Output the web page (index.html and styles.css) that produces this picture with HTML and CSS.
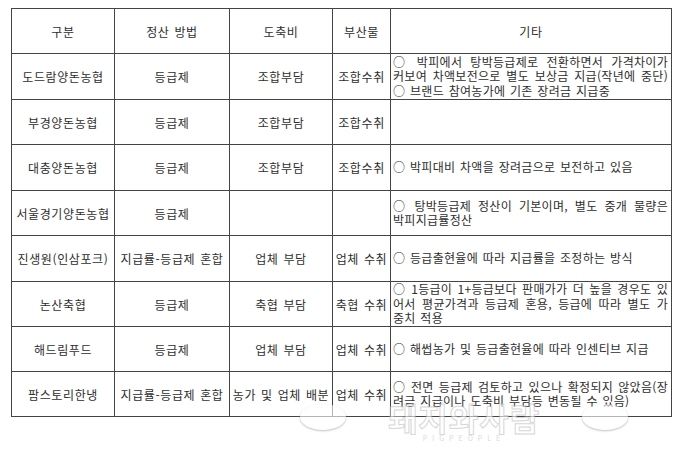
FILE: index.html
```html
<!DOCTYPE html>
<html lang="ko">
<head>
<meta charset="utf-8">
<link rel="stylesheet" href="styles.css">
</head>
<body>
<div class="wrap">
<table class="grid">
  <colgroup>
    <col class="c1"><col class="c2"><col class="c3"><col class="c4"><col class="c5">
  </colgroup>
  <tr class="r45"><th>구분</th><th>정산 방법</th><th>도축비</th><th>부산물</th><th>기타</th></tr>
  <tr class="r46"><td>도드람양돈농협</td><td>등급제</td><td>조합부담</td><td>조합수취</td><td class="note"><span class="ln j">○ 박피에서 탕박등급제로 전환하면서 가격차이가</span><span class="ln j">커보여 차액보전으로 별도 보상금 지급(작년에 중단)</span><span class="ln">○ 브랜드 참여농가에 기존 장려금 지급중</span></td></tr>
  <tr class="r45"><td>부경양돈농협</td><td>등급제</td><td>조합부담</td><td>조합수취</td><td class="note"></td></tr>
  <tr class="r46"><td>대충양돈농협</td><td>등급제</td><td>조합부담</td><td>조합수취</td><td class="note"><span class="ln">○ 박피대비 차액을 장려금으로 보전하고 있음</span></td></tr>
  <tr class="r45"><td>서울경기양돈농협</td><td>등급제</td><td></td><td></td><td class="note"><span class="ln j">○ 탕박등급제 정산이 기본이며, 별도 중개 물량은</span><span class="ln">박피지급률정산</span></td></tr>
  <tr class="r46"><td>진생원(인삼포크)</td><td>지급률-등급제 혼합</td><td>업체 부담</td><td>업체 수취</td><td class="note"><span class="ln">○ 등급출현율에 따라 지급률을 조정하는 방식</span></td></tr>
  <tr class="r45"><td>논산축협</td><td>등급제</td><td>축협 부담</td><td>축협 수취</td><td class="note"><span class="ln j">○ 1등급이 1+등급보다 판매가가 더 높을 경우도 있</span><span class="ln j">어서 평균가격과 등급제 혼용, 등급에 따라 별도 가</span><span class="ln">중치 적용</span></td></tr>
  <tr class="r45"><td>해드림푸드</td><td>등급제</td><td>업체 부담</td><td>업체 수취</td><td class="note"><span class="ln">○ 해썹농가 및 등급출현율에 따라 인센티브 지급</span></td></tr>
  <tr class="r45"><td>팜스토리한냉</td><td>지급률-등급제 혼합</td><td>농가 및 업체 배분</td><td>업체 수취</td><td class="note"><span class="ln j">○ 전면 등급제 검토하고 있으나 확정되지 않았음(장</span><span class="ln">려금 지급이나 도축비 부담등 변동될 수 있음)</span></td></tr>
</table>
<div class="mark">
  <span class="blob blob-l"></span>
  <div class="mark-core">
    <span class="mark-text">돼지와사람</span>
    <span class="mark-sub">PIGPEOPLE</span>
  </div>
  <span class="blob blob-r"></span>
</div>
</div>
</body>
</html>
```
FILE: styles.css
```css
html, body {
  margin: 0;
  padding: 0;
  background: #ffffff;
}
body {
  font-family: "Noto Sans CJK KR", "Noto Sans", sans-serif;
  color: #2e2e2e;
  font-size: 12px;
}
.wrap {
  position: relative;
  padding: 8px 0 0 11px;
  width: 680px;
  height: 462px;
  box-sizing: border-box;
}
.grid {
  border-collapse: collapse;
  table-layout: fixed;
  width: 660px;
}
.c1 { width: 103px; }
.c2 { width: 115px; }
.c3 { width: 103px; }
.c4 { width: 58px; }
.c5 { width: 281px; }
.grid th, .grid td {
  border: 1px solid #444444;
  padding: 0;
  text-align: center;
  vertical-align: middle;
  font-weight: normal;
  white-space: nowrap;
  line-height: 15px;
  letter-spacing: 0.6px;
  word-spacing: 1px;
  overflow: hidden;
}
.r45 th, .r45 td { height: 44px; }
.r46 td { height: 45px; }
.grid td.note {
  text-align: left;
  padding: 0 3px 0 2px;
  letter-spacing: 0.3px;
  word-spacing: 1px;
}
.ln {
  display: block;
  white-space: nowrap;
  line-height: 14.5px;
}
.ln.j {
  text-align: justify;
  text-align-last: justify;
}
.mark {
  position: absolute;
  left: 300px;
  top: 400px;
  width: 328px;
  height: 46px;
  display: flex;
  align-items: flex-start;
  justify-content: space-between;
  opacity: 0.6;
  pointer-events: none;
}
.blob {
  width: 46px;
  height: 26px;
  margin-top: 4px;
  border-radius: 50%;
  background: #ffffff;
  box-shadow: 0 1px 2px #9a9a9a;
}
.mark-core {
  display: flex;
  flex-direction: column;
  align-items: center;
}
.mark-text {
  font-size: 32px;
  font-weight: bold;
  line-height: 34px;
  color: #ffffff;
  -webkit-text-stroke: 1px #bdbdbd;
  letter-spacing: 1px;
}
.mark-sub {
  font-size: 7px;
  letter-spacing: 5px;
  color: #c4c4c4;
  line-height: 8px;
}
```
